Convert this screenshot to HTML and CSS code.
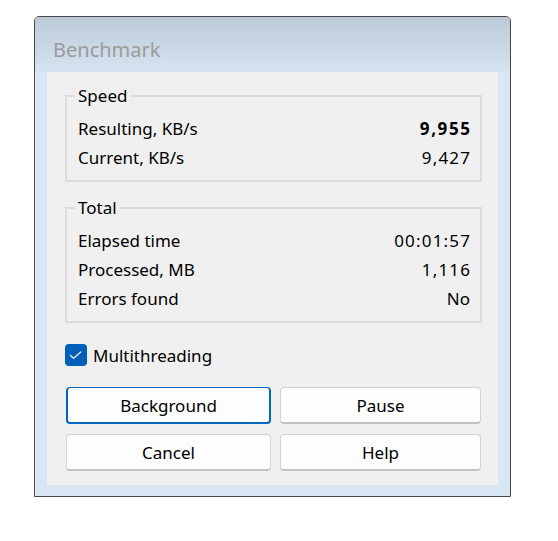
FILE: index.html
```html
<!DOCTYPE html>
<html>
<head>
<meta charset="utf-8">
<title>Benchmark</title>
<link rel="stylesheet" href="styles.css">
</head>
<body>
<div class="window">
  <div class="titlebar"><span class="title">Benchmark</span></div>
  <div class="client">
    <div class="group">
      <div class="legend">Speed</div>
      <div class="row"><span>Resulting, KB/s</span><span class="num bold">9,955</span></div>
      <div class="row"><span>Current, KB/s</span><span class="num">9,427</span></div>
    </div>
    <div class="group group-total">
      <div class="legend">Total</div>
      <div class="row"><span>Elapsed time</span><span class="num">00:01:57</span></div>
      <div class="row"><span>Processed, MB</span><span class="num">1,116</span></div>
      <div class="row"><span>Errors found</span><span>No</span></div>
    </div>
    <div class="check-row">
      <span class="checkbox">
        <svg width="22" height="22" viewBox="0 0 22 22"><polyline points="5.5,11.5 8.5,14.3 15.8,8" fill="none" stroke="#e3edf8" stroke-width="1.4" stroke-linecap="round" stroke-linejoin="round"/></svg>
      </span>
      <span class="check-label">Multithreading</span>
    </div>
    <div class="buttons">
      <div class="btn btn-default">Background</div>
      <div class="btn">Pause</div>
      <div class="btn">Cancel</div>
      <div class="btn">Help</div>
    </div>
  </div>
</div>
</body>
</html>
```
FILE: styles.css
```css
html, body {
  margin: 0;
  padding: 0;
  background: #ffffff;
}
body {
  font-family: "Noto Sans", "Open Sans", sans-serif;
  font-size: 17px;
  color: #000;
}
.window {
  box-sizing: border-box;
  margin: 16px 0 0 34px;
  width: 477px;
  height: 481px;
  border: 1px solid #474747;
  border-radius: 5px 5px 0 0;
  background: #d9e6f3;
  padding: 0 11px 11px 12px;
  box-shadow: inset 1px 1px 0 #eef3f9;
}
.titlebar {
  height: 55px;
  margin: 0 -11px 0 -12px;
  padding-left: 18px;
  background: linear-gradient(to bottom, #bccad8 0%, #c9d7e5 50%, #d6e3f0 100%);
  border-radius: 4px 4px 0 0;
  box-sizing: border-box;
  padding-top: 20px;
}
.title {
  font-size: 20px;
  line-height: 26px;
  color: #9b9b9b;
}
.client {
  box-sizing: border-box;
  width: 451px;
  height: 413px;
  background: #f0f0f0;
  padding: 23px 16px 0 18px;
}
.group {
  border: 2px solid #dcdcdc;
  padding: 0 10px 8px 11px;
}
.group-total {
  margin-top: 25px;
}
.legend {
  width: fit-content;
  margin: -11px 0 8px -3px;
  padding: 0 3px;
  background: #f0f0f0;
  line-height: 20px;
}
.row {
  display: flex;
  justify-content: space-between;
  line-height: 29px;
}
.num {
  letter-spacing: 1.2px;
  margin-right: -1.2px;
}
.bold {
  font-weight: bold;
  letter-spacing: 1.6px;
  margin-right: -1.6px;
}
.check-row {
  display: flex;
  align-items: center;
  margin-top: 21px;
  height: 22px;
}
.checkbox {
  width: 22px;
  height: 22px;
  border-radius: 4px;
  background: #005fb8;
  display: flex;
}
.check-label {
  margin-left: 6px;
}
.buttons {
  display: grid;
  grid-template-columns: 205px 201px;
  grid-auto-rows: 37px;
  column-gap: 9px;
  row-gap: 10px;
  margin: 21px 0 0 1px;
}
.btn {
  box-sizing: border-box;
  display: flex;
  align-items: center;
  justify-content: center;
  background: #fdfdfd;
  border: 1px solid #d3d3d3;
  border-bottom: 2px solid #c2c2c2;
  border-radius: 4px;
}
.btn-default {
  border: 2px solid #0067c0;
  border-top-width: 1px;
}
```
